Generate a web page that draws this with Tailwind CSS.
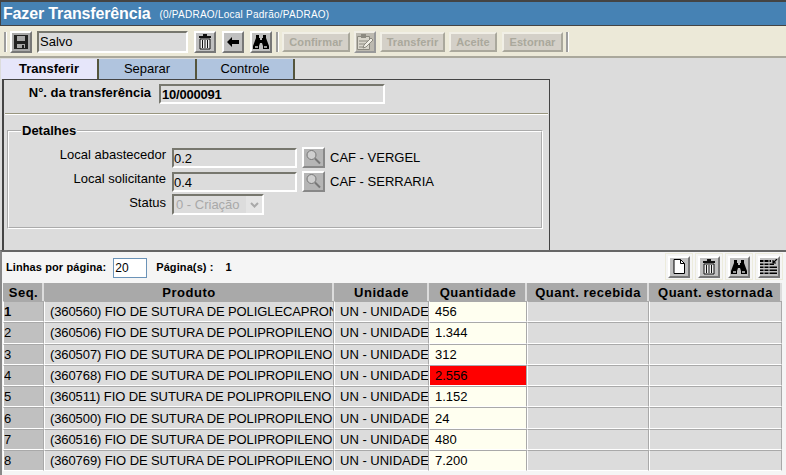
<!DOCTYPE html>
<html lang="pt">
<head>
    <meta charset="UTF-8">
    <title>Fazer Transferência</title>
    <script src="https://cdn.jsdelivr.net/npm/@tailwindcss/browser@4"></script>
</head>
<body class="w-[786px] h-[475px] overflow-hidden bg-[#dcdcdc] font-['Liberation_Sans',Arial,sans-serif] text-[12px] text-black">
    <!-- titulo -->
    <div class="h-[25px] bg-[#4682b4] border-t-2 border-l border-[#444] flex items-center pl-[2px] gap-[9px] text-white">
        <span class="text-[16px] font-bold leading-none tracking-[-0.15px]">Fazer Transferência</span>
        <span class="text-[10px] tracking-[0.25px] mt-[2px]">(0/PADRAO/Local Padrão/PADRAO)</span>
    </div>
    <!-- toolbar -->
    <div class="h-[33px] bg-[#ece9d8] border-t border-[#444] border-b-2 border-b-[#aaa89c] flex items-center pl-[4px] pt-[1px]">
        <div class="w-[3px] h-[20px] bg-[#9d9d9d] border-r border-white mr-[3px]"></div>
        <button class="w-[22px] h-[22px] bg-[#a9a9a9] border-2 border-t-white border-l-white border-r-[#777] border-b-[#777] flex items-center justify-center">
            <svg width="16" height="16" viewBox="0 0 16 16"><path d="M1 1h14v14H1z" fill="#222"/><path d="M4 2h8v5H4z" fill="#a9a9a9"/><path d="M4 10h8v4H4z" fill="#a9a9a9"/><path d="M9 11h2v3H9z" fill="#222"/></svg>
        </button>
        <input value="Salvo" readonly class="ml-[5px] w-[151px] h-[22px] bg-[#dcdcdc] border-2 border-t-[#77776e] border-l-[#77776e] border-r-white border-b-white px-[1px] text-[13px] outline-none">
        <button class="ml-[6px] w-[22px] h-[22px] bg-[#c0c0c0] border-2 border-t-white border-l-white border-r-[#777] border-b-[#777] flex items-center justify-center">
            <svg width="14" height="16" viewBox="0 0 14 16"><path d="M5 0h4v2h4v2H1V2h4z" fill="#111"/><path d="M2 5h10v10H2z" fill="#eee" stroke="#111"/><path d="M4.500 6v8M7 6v8M9.500 6v8" stroke="#111"/></svg>
        </button>
        <button class="ml-[6px] w-[22px] h-[22px] bg-[#c0c0c0] border-2 border-t-white border-l-white border-r-[#777] border-b-[#777] flex items-center justify-center">
            <svg width="12" height="10" viewBox="0 0 12 10"><path d="M0 5l5-5v3h7v4H5v3z" fill="#000"/></svg>
        </button>
        <button class="ml-[6px] w-[22px] h-[22px] bg-[#c0c0c0] border-2 border-t-white border-l-white border-r-[#777] border-b-[#777] flex items-center justify-center">
            <svg width="16" height="14" viewBox="0 0 16 14"><path d="M3 0h3v3h1v2h2V3h1V0h3v3l3 8v3H10v-3l-1-3H7l-1 3v3H0v-3l3-8z" fill="#000"/><path d="M2 11h3v2H2zM11 11h3v2h-3z" fill="#999"/></svg>
        </button>
        <div class="ml-[4px] w-[3px] h-[20px] bg-[#9d9d9d] border-r border-white"></div>
        <button disabled class="ml-[3px] w-[68px] h-[20px] bg-[#d4d0c8] border-2 border-t-[#f1efe6] border-l-[#f1efe6] border-r-[#aaa89c] border-b-[#aaa89c] text-[11px] tracking-[0.1px] font-bold text-[#aaa89c]">Confirmar</button>
        <button disabled class="ml-[4px] w-[22px] h-[22px] bg-[#bdbab0] border-2 border-t-[#f1efe6] border-l-[#f1efe6] border-r-[#999] border-b-[#999] flex items-center justify-center">
            <svg width="18" height="16" viewBox="0 0 18 16"><path d="M1.500 2.500h12v13h-12z" fill="#d8d5ca" stroke="#8c8a80"/><path d="M5 0h5v4H5z" fill="#8c8a80"/><path d="M3 7h9M3 10h7M3 13h5" stroke="#8c8a80"/><path d="M7 14l1-3 7-7 2 2-7 7z" fill="#f1efe6" stroke="#8c8a80"/></svg>
        </button>
        <button disabled class="ml-[4px] w-[65px] h-[20px] bg-[#d4d0c8] border-2 border-t-[#f1efe6] border-l-[#f1efe6] border-r-[#aaa89c] border-b-[#aaa89c] text-[11px] tracking-[0.1px] font-bold text-[#aaa89c]">Transferir</button>
        <button disabled class="ml-[4px] w-[48px] h-[20px] bg-[#d4d0c8] border-2 border-t-[#f1efe6] border-l-[#f1efe6] border-r-[#aaa89c] border-b-[#aaa89c] text-[11px] tracking-[0.1px] font-bold text-[#aaa89c]">Aceite</button>
        <button disabled class="ml-[5px] w-[61px] h-[20px] bg-[#d4d0c8] border-2 border-t-[#f1efe6] border-l-[#f1efe6] border-r-[#aaa89c] border-b-[#aaa89c] text-[11px] tracking-[0.1px] font-bold text-[#aaa89c]">Estornar</button>
        <div class="ml-[3px] w-[3px] h-[20px] bg-[#9d9d9d] border-r border-white"></div>
    </div>
    <!-- abas -->
    <div class="flex h-[20px] mt-[1px] pl-[1px] text-[13px]">
        <div class="w-[98px] bg-[#e6e6fa] border-r-2 border-[#55553c] text-center font-bold leading-[20px]">Transferir</div>
        <div class="w-[98px] bg-[#b0c4de] border-r-2 border-[#55553c] text-center leading-[20px]">Separar</div>
        <div class="w-[98px] bg-[#b0c4de] border-r-2 border-[#55553c] text-center leading-[20px]">Controle</div>
    </div>
    <!-- painel -->
    <div class="ml-[2px] w-[548px] h-[171px] border-l-2 border-t border-r border-[#444] px-[1px] pt-[4px]">
        <div class="flex items-center h-[20px]">
            <span class="w-[146px] text-right font-bold text-[13px] mb-[2px]">N°. da transferência</span>
            <input value="10/000091" readonly class="ml-[8px] w-[226px] h-[20px] bg-[#dcdcdc] border-2 border-t-[#77776e] border-l-[#77776e] border-r-white border-b-white px-[1px] text-[13px] font-bold tracking-[-0.2px] outline-none">
        </div>
        <div class="mt-[9px] border-t border-[#99967f] border-b border-b-white h-[2px]"></div>
        <fieldset class="mt-[9px] ml-[2px] w-[536px] h-[105px] border-2 border-white [border-style:groove] px-[12px]">
            <legend class="font-bold text-[13px] px-[1px] leading-[14px]">Detalhes</legend>
            <div class="flex items-center h-[24px] mt-[8px] ml-[-10px]">
                <span class="w-[155px] text-right text-[13px] mb-[6px]">Local abastecedor</span>
                <input value="0.2" readonly class="ml-[6px] w-[125px] h-[20px] bg-[#dcdcdc] border-2 border-t-[#77776e] border-l-[#77776e] border-r-white border-b-white text-[13px] leading-none outline-none">
                <button class="ml-[5px] w-[23px] h-[21px] mb-[2px] bg-[#b5b5b5] border-2 border-t-white border-l-white border-r-[#888] border-b-[#888] flex items-center justify-center">
                    <svg width="18" height="16" viewBox="0 0 18 16"><circle cx="6.500" cy="6" r="4.500" fill="#cfcfcf" stroke="#777"/><path d="M10 9.500l5 5" stroke="#777" stroke-width="2"/></svg>
                </button>
                <span class="ml-[5px] text-[13px]">CAF - VERGEL</span>
            </div>
            <div class="flex items-center h-[24px] ml-[-10px]">
                <span class="w-[155px] text-right text-[13px] mb-[6px]">Local solicitante</span>
                <input value="0.4" readonly class="ml-[6px] w-[125px] h-[20px] bg-[#dcdcdc] border-2 border-t-[#77776e] border-l-[#77776e] border-r-white border-b-white text-[13px] leading-none outline-none">
                <button class="ml-[5px] w-[23px] h-[21px] mb-[2px] bg-[#b5b5b5] border-2 border-t-white border-l-white border-r-[#888] border-b-[#888] flex items-center justify-center">
                    <svg width="18" height="16" viewBox="0 0 18 16"><circle cx="6.500" cy="6" r="4.500" fill="#cfcfcf" stroke="#777"/><path d="M10 9.500l5 5" stroke="#777" stroke-width="2"/></svg>
                </button>
                <span class="ml-[5px] text-[13px]">CAF - SERRARIA</span>
            </div>
            <div class="flex items-center h-[21px] ml-[-10px]">
                <span class="w-[155px] text-right text-[13px] mb-[4px]">Status</span>
                <div class="ml-[6px] w-[92px] h-[21px] bg-[#dcdcdc] border-2 border-t-[#77776e] border-l-[#77776e] border-r-white border-b-white flex items-center pl-[2px] text-[13px] text-[#a9a9a9]">
                    <span class="flex-1">0 - Criação</span>
                    <span class="w-[16px] h-[17px] bg-[#e4e4e4] flex items-center justify-center"><svg width="9" height="6" viewBox="0 0 9 6"><path d="M1 1l3.500 3.500L8 1" fill="none" stroke="#a9a9a9" stroke-width="2"/></svg></span>
                </div>
            </div>
        </fieldset>
    </div>
    <!-- lista -->
    <div class="h-[225px] bg-[#f5f5f5] border-t-2 border-t-[#666] border-l-2 border-l-[#888] pl-[1px]">
        <div class="h-[31px] flex items-center pl-[3px] text-[11px] tracking-[0.1px] font-bold">
            <span>Linhas por página:</span>
            <input value="20" class="ml-[7px] w-[34px] h-[20px] bg-white border border-[#6b93b8] pl-[1px] text-[12px] font-normal outline-none">
            <span class="ml-[9px]">Página(s) :</span>
            <span class="ml-[12px]">1</span>
            <div class="ml-auto mr-[3px] mb-[2px] flex gap-[2px]">
                <button class="w-[28px] h-[27px] bg-[#f5f5f5] border border-[#ecebdc] flex items-center justify-center"><span class="w-[22px] h-[22px] bg-[#c0c0c0] border-2 border-t-white border-l-white border-r-[#777] border-b-[#777] flex items-center justify-center">
                    <svg width="12" height="15" viewBox="0 0 12 15"><path d="M1 .5h6.500l4 4v10H1z" fill="#fff" stroke="#000"/><path d="M7.500.5v4h4" fill="none" stroke="#000"/></svg></span></button>
                <button class="w-[28px] h-[27px] bg-[#f5f5f5] border border-[#ecebdc] flex items-center justify-center"><span class="w-[22px] h-[22px] bg-[#c0c0c0] border-2 border-t-white border-l-white border-r-[#777] border-b-[#777] flex items-center justify-center">
                    <svg width="14" height="16" viewBox="0 0 14 16"><path d="M5 0h4v2h4v2H1V2h4z" fill="#111"/><path d="M2 5h10v10H2z" fill="#eee" stroke="#111"/><path d="M4.500 6v8M7 6v8M9.500 6v8" stroke="#111"/></svg></span></button>
                <button class="w-[28px] h-[27px] bg-[#f5f5f5] border border-[#ecebdc] flex items-center justify-center"><span class="w-[22px] h-[22px] bg-[#c0c0c0] border-2 border-t-white border-l-white border-r-[#777] border-b-[#777] flex items-center justify-center">
                    <svg width="16" height="14" viewBox="0 0 16 14"><path d="M3 0h3v3h1v2h2V3h1V0h3v3l3 8v3H10v-3l-1-3H7l-1 3v3H0v-3l3-8z" fill="#000"/><path d="M2 11h3v2H2zM11 11h3v2h-3z" fill="#999"/></svg></span></button>
                <button class="w-[28px] h-[27px] bg-[#f5f5f5] border border-[#ecebdc] flex items-center justify-center"><span class="w-[22px] h-[22px] bg-[#c0c0c0] border-2 border-t-white border-l-white border-r-[#777] border-b-[#777] flex items-center justify-center">
                    <svg width="18" height="16" viewBox="0 0 18 16"><path d="M0 1h11v2H0zM0 4.500h14v1.500H0zM0 7.500h17v1.500H0zM0 10.500h17v1.500H0zM0 13.500h17v1.500H0z" fill="#000"/><path d="M4 1v14M9 1v14" stroke="#c0c0c0"/><path d="M17 0l-4 4M13 1v3h3" fill="none" stroke="#000" stroke-width="1.200"/></svg></span></button>
            </div>
        </div>
        <table class="table-fixed border-separate border-spacing-0 w-[779px] text-[13px]">
            <thead class="[&_th]:h-[18px] [&_th]:leading-[17px] [&_th]:bg-[#a9a9a9] [&_th]:font-bold [&_th]:tracking-[0.5px] [&_th]:border-r-2 [&_th]:border-r-[#dcdcdc] [&_th]:pl-[2px] [&_th]:pr-0 [&_th]:py-0">
                <tr>
                    <th class="w-[41px]">Seq.</th>
                    <th class="w-[290px]">Produto</th>
                    <th class="w-[95px]">Unidade</th>
                    <th class="w-[98px]">Quantidade</th>
                    <th class="w-[122px]">Quant. recebida</th>
                    <th class="w-[133px]">Quant. estornada</th>
                </tr>
            </thead>
            <tbody class="[&_td]:h-[21.3px] [&_td]:leading-[19px] [&_td]:border [&_td]:border-t-[#a9a9a9] [&_td]:border-l-white [&_td]:border-r-[#a9a9a9] [&_td]:border-b-white [&_td]:bg-[#dcdcdc] [&_td]:pl-[5px] [&_td]:whitespace-nowrap [&_td]:overflow-hidden">
                <tr><td class="!bg-[#c0c0c0] !pl-0 font-bold">1</td><td class="tracking-[-0.1px]">(360560) FIO DE SUTURA DE POLIGLECAPRONE</td><td>UN - UNIDADE</td><td class="!bg-[#fffff0]">456</td><td></td><td></td></tr>
                <tr><td class="!bg-[#c0c0c0] !pl-0">2</td><td class="tracking-[-0.1px]">(360506) FIO DE SUTURA DE POLIPROPILENO</td><td>UN - UNIDADE</td><td class="!bg-[#fffff0]">1.344</td><td></td><td></td></tr>
                <tr><td class="!bg-[#c0c0c0] !pl-0">3</td><td class="tracking-[-0.1px]">(360507) FIO DE SUTURA DE POLIPROPILENO</td><td>UN - UNIDADE</td><td class="!bg-[#fffff0]">312</td><td></td><td></td></tr>
                <tr><td class="!bg-[#c0c0c0] !pl-0">4</td><td class="tracking-[-0.1px]">(360768) FIO DE SUTURA DE POLIPROPILENO</td><td>UN - UNIDADE</td><td class="!bg-[#ff0000]">2.556</td><td></td><td></td></tr>
                <tr><td class="!bg-[#c0c0c0] !pl-0">5</td><td class="tracking-[-0.1px]">(360511) FIO DE SUTURA DE POLIPROPILENO</td><td>UN - UNIDADE</td><td class="!bg-[#fffff0]">1.152</td><td></td><td></td></tr>
                <tr><td class="!bg-[#c0c0c0] !pl-0">6</td><td class="tracking-[-0.1px]">(360500) FIO DE SUTURA DE POLIPROPILENO</td><td>UN - UNIDADE</td><td class="!bg-[#fffff0]">24</td><td></td><td></td></tr>
                <tr><td class="!bg-[#c0c0c0] !pl-0">7</td><td class="tracking-[-0.1px]">(360516) FIO DE SUTURA DE POLIPROPILENO</td><td>UN - UNIDADE</td><td class="!bg-[#fffff0]">480</td><td></td><td></td></tr>
                <tr><td class="!bg-[#c0c0c0] !pl-0">8</td><td class="tracking-[-0.1px]">(360769) FIO DE SUTURA DE POLIPROPILENO</td><td>UN - UNIDADE</td><td class="!bg-[#fffff0]">7.200</td><td></td><td></td></tr>
            </tbody>
        </table>
    </div>
</body>
</html>
